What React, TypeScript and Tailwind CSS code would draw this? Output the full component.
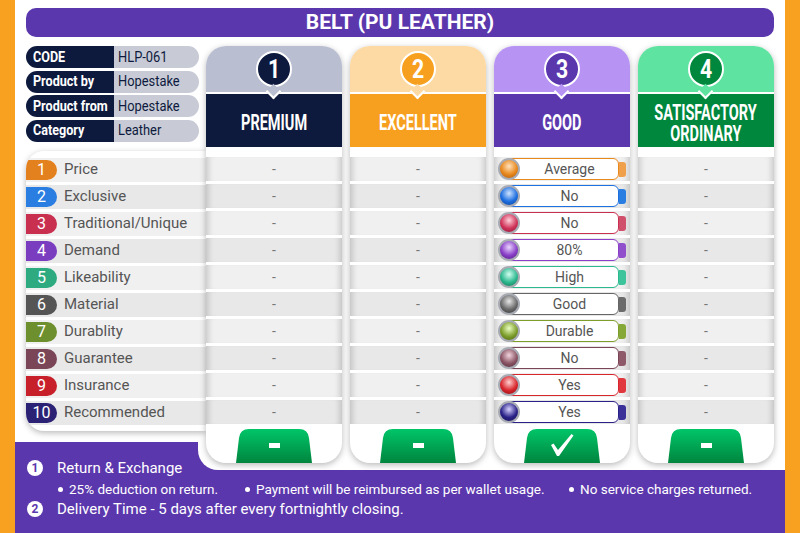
import React from "react";

const roboto = "font-['Roboto',sans-serif]";

const info = [
  ["CODE", "HLP-061"],
  ["Product by", "Hopestake"],
  ["Product from", "Hopestake"],
  ["Category", "Leather"],
];

const rows = [
  { n: 1, label: "Price", val: "Average", pill: "bg-[#E3811E]", border: "border-[#E8891E]", tab: "bg-[#F0A04A]", ball: "bg-[radial-gradient(circle_at_50%_35%,#ffe2bd_0%,#E8891E_55%,#a85608_100%)]" },
  { n: 2, label: "Exclusive", val: "No", pill: "bg-[#2A7DE1]", border: "border-[#1E6FE0]", tab: "bg-[#2A7DE1]", ball: "bg-[radial-gradient(circle_at_50%_35%,#cfe3ff_0%,#1E6FE0_55%,#0b3f95_100%)]" },
  { n: 3, label: "Traditional/Unique", val: "No", pill: "bg-[#C9304F]", border: "border-[#C9304F]", tab: "bg-[#D0506C]", ball: "bg-[radial-gradient(circle_at_50%_35%,#ffd0da_0%,#D0345A_55%,#8a1530_100%)]" },
  { n: 4, label: "Demand", val: "80%", pill: "bg-[#7B3DC0]", border: "border-[#8A3FC8]", tab: "bg-[#9050CC]", ball: "bg-[radial-gradient(circle_at_50%_35%,#ead6ff_0%,#8A3FC8_55%,#4c1a80_100%)]" },
  { n: 5, label: "Likeability", val: "High", pill: "bg-[#2EAA80]", border: "border-[#2DB88F]", tab: "bg-[#3DC49A]", ball: "bg-[radial-gradient(circle_at_50%_35%,#d2fff0_0%,#2DB88F_55%,#12704f_100%)]" },
  { n: 6, label: "Material", val: "Good", pill: "bg-[#555555]", border: "border-[#666666]", tab: "bg-[#6B6B6B]", ball: "bg-[radial-gradient(circle_at_50%_35%,#e6e6e6_0%,#6B6B6B_55%,#333333_100%)]" },
  { n: 7, label: "Durablity", val: "Durable", pill: "bg-[#6E8F2E]", border: "border-[#7E9E2C]", tab: "bg-[#86A838]", ball: "bg-[radial-gradient(circle_at_50%_35%,#eaffc4_0%,#7E9E2C_55%,#46600f_100%)]" },
  { n: 8, label: "Guarantee", val: "No", pill: "bg-[#7A4556]", border: "border-[#7A4556]", tab: "bg-[#8E5A6A]", ball: "bg-[radial-gradient(circle_at_50%_35%,#f2d4de_0%,#8B5565_55%,#502838_100%)]" },
  { n: 9, label: "Insurance", val: "Yes", pill: "bg-[#C8202A]", border: "border-[#D8262D]", tab: "bg-[#E0383E]", ball: "bg-[radial-gradient(circle_at_50%_35%,#ffd0d0_0%,#D8262D_55%,#8a0a10_100%)]" },
  { n: 10, label: "Recommended", val: "Yes", pill: "bg-[#2B2275]", border: "border-[#2B2288]", tab: "bg-[#3A3098]", ball: "bg-[radial-gradient(circle_at_50%_35%,#d6d2ff_0%,#2B2288_55%,#140f50_100%)]" },
];

const columns = [
  { n: 1, title: ["PREMIUM"], light: "bg-[#B9BED0]", dark: "bg-[#0E1A3D]", check: false },
  { n: 2, title: ["EXCELLENT"], light: "bg-[#FDD9A3]", dark: "bg-[#F7A020]", check: false },
  { n: 3, title: ["GOOD"], light: "bg-[#B794F4]", dark: "bg-[#5B37AD]", check: true },
  { n: 4, title: ["SATISFACTORY", "ORDINARY"], light: "bg-[#5FE3A1]", dark: "bg-[#00873E]", check: false },
];

function stripe(i: number) {
  return i % 2 === 0 ? "bg-[#F0F0F0]" : "bg-[#E8E8E8]";
}

function GreenButton({ check }: { check: boolean }) {
  return (
    <div className="relative h-[34px] w-[76px]">
      <svg width="76" height="34" viewBox="0 0 76 34" className="block">
        <defs>
          <linearGradient id="gb" x1="0" y1="0" x2="0" y2="1">
            <stop offset="0" stopColor="#00C568" />
            <stop offset="1" stopColor="#00853E" />
          </linearGradient>
        </defs>
        <path d="M0 34 L3 9 Q4 0 13 0 L63 0 Q72 0 73 9 L76 34 Z" fill="url(#gb)" />
      </svg>
      <div className="absolute inset-0 flex items-center justify-center pb-[2px]">
        {check ? (
          <svg width="24" height="24" viewBox="0 0 24 24">
            <path d="M1 12 L3.5 10.5 L8 17 L21.5 1 L23.5 2.5 L9 23 L7 23 Z" fill="#fff" />
          </svg>
        ) : (
          <div className="h-[5px] w-[11px] bg-white" />
        )}
      </div>
    </div>
  );
}

function Column({ col }: { col: (typeof columns)[number] }) {
  return (
    <div className="flex h-[417px] w-[136px] flex-col overflow-hidden rounded-[20px] bg-white shadow-[0_2px_6px_rgba(0,0,0,0.28)]">
      <div className={`flex h-[46px] items-center justify-center ${col.light}`}>
        <div className={`flex h-[36px] w-[36px] items-center justify-center rounded-full border-2 border-white text-white ${col.dark}`}>
          <span className={`${roboto} inline-block scale-x-[0.85] text-[25px] leading-none font-bold`}>{col.n}</span>
        </div>
      </div>
      <div className="h-[2px] bg-white" />
      <div className={`relative flex h-[53px] flex-col items-center justify-center pt-[4px] ${col.dark}`}>
        <div className={`absolute left-1/2 top-[-8px] -ml-[6px] h-[11px] w-[11px] rotate-45 border-b-2 border-r-2 border-white ${col.light}`} />
        {col.title.map((t) => (
          <span key={t} className={`${roboto} inline-block scale-x-[0.66] whitespace-nowrap text-[22px] leading-[21px] font-bold text-white`}>
            {t}
          </span>
        ))}
      </div>
      <div className="flex flex-col gap-[3px] pt-[10px]">
        {rows.map((r, i) => (
          <div
            key={r.n}
            className={`flex h-[24px] items-center justify-center shadow-[inset_7px_0_6px_-5px_rgba(0,0,0,0.18),inset_-7px_0_6px_-5px_rgba(0,0,0,0.18)] ${stripe(i)}`}
          >
            {col.check ? (
              <div className="relative flex h-[22px] w-[127px] items-center">
                <div className={`ml-[8px] flex h-[22px] flex-1 items-center justify-center rounded-[6px] border bg-white pl-[14px] text-[14px] text-[#555] ${roboto} ${r.border}`}>
                  {r.val}
                </div>
                <div className={`h-[15px] w-[7px] rounded-r-[3px] ${r.tab}`} />
                <div className={`absolute left-[-1px] top-0 h-[22px] w-[22px] rounded-full border-2 border-[#A8ABB3] ${r.ball}`} />
              </div>
            ) : (
              <span className={`text-[14px] text-[#777] ${roboto}`}>-</span>
            )}
          </div>
        ))}
      </div>
      <div className="flex flex-1 items-end justify-center">
        <GreenButton check={col.check} />
      </div>
    </div>
  );
}

function Dot({ n }: { n: number }) {
  return (
    <span className="flex h-[16px] w-[16px] shrink-0 items-center justify-center rounded-full bg-white text-[12px] font-bold text-[#5B37AD]">
      {n}
    </span>
  );
}

function Bullet({ children }: { children: React.ReactNode }) {
  return (
    <span className="flex items-center gap-[6px]">
      <span className="h-[5px] w-[5px] rounded-full bg-white" />
      <span>{children}</span>
    </span>
  );
}

export default function App() {
  return (
    <div className={`h-[533px] w-[800px] overflow-hidden bg-[#F8A01F] px-[15px] ${roboto}`}>
      <div className="flex h-full flex-col bg-white">
        <div className="relative z-10 px-[11px] pt-[8px]">
          <div className="flex h-[29px] items-center justify-center rounded-[10px] bg-[#5B37AD] text-[21px] font-bold text-white">
            BELT (PU LEATHER)
          </div>

          <div className="mt-[9px] flex">
            <div className="flex w-[181px] flex-col">
              <div className="flex w-[173px] flex-col gap-[2.5px]">
                {info.map(([k, v]) => (
                  <div key={k} className="flex h-[22px]">
                    <div className="flex w-[88px] items-center rounded-l-full bg-[#0E1A3D] pl-[7px] text-white">
                      <span className="inline-block origin-left scale-x-[0.9] whitespace-nowrap text-[14px] font-bold">{k}</span>
                    </div>
                    <div className="flex flex-1 items-center rounded-r-full bg-[#C8CBD6] pl-[4px] text-[#0E1A3D]">
                      <span className="inline-block origin-left scale-x-[0.92] whitespace-nowrap text-[14px]">{v}</span>
                    </div>
                  </div>
                ))}
              </div>

              <div className="mt-[9px] flex h-[280px] flex-col gap-[3px] overflow-hidden rounded-l-[18px] bg-white pt-[7px] shadow-[0_2px_6px_rgba(0,0,0,0.28)]">
                {rows.map((r, i) => (
                  <div key={r.n} className={`flex h-[24px] items-center ${stripe(i)}`}>
                    <div className={`flex h-[20px] w-[31px] items-center justify-center rounded-r-full text-[16px] text-white ${r.pill}`}>
                      {r.n}
                    </div>
                    <span className="ml-[7px] text-[15px] text-[#555]">{r.label}</span>
                  </div>
                ))}
              </div>
            </div>

            <div className="flex gap-[8px]">
              {columns.map((c) => (
                <Column key={c.n} col={c} />
              ))}
            </div>
          </div>
        </div>

        <footer className="-mt-[21px] flex-1 whitespace-nowrap bg-[#5B37AD] text-white">
          <div className="flex h-[35px]">
            <div className="flex w-[183px] items-end gap-[14px] pl-[12px]">
              <span className="mb-[1px]">
                <Dot n={1} />
              </span>
              <span className="text-[15px] leading-[18px]">Return &amp; Exchange</span>
            </div>
            <div className="h-[28px] flex-1 rounded-bl-[20px] bg-white" />
          </div>
          <div className="mt-[3px] grid grid-cols-[187px_324px_auto] pl-[43px] text-[13.5px] leading-[18px]">
            <Bullet>25% deduction on return.</Bullet>
            <Bullet>Payment will be reimbursed as per wallet usage.</Bullet>
            <Bullet>No service charges returned.</Bullet>
          </div>
          <div className="mt-[2px] flex items-center gap-[14px] pl-[12px]">
            <Dot n={2} />
            <span className="text-[15px] leading-[18px]">Delivery Time - 5 days after every fortnightly closing.</span>
          </div>
        </footer>
      </div>
    </div>
  );
}
